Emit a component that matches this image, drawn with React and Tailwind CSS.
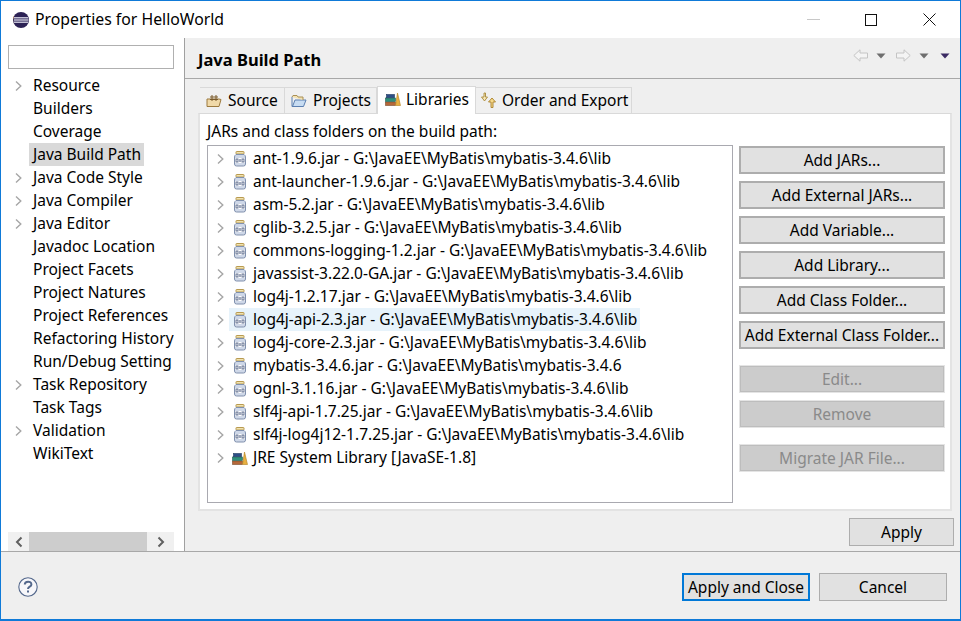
function Chevron({ className = "" }) {
  return (
    <svg width="9" height="12" viewBox="0 0 9 12" className={className}>
      <path d="M2 1.5 L6.8 6 L2 10.5" fill="none" stroke="#a6a6a6" strokeWidth="1.4" />
    </svg>
  );
}

function Jar() {
  return (
    <svg width="14" height="16" viewBox="0 0 14 16" className="shrink-0">
      <rect x="3" y="0.5" width="8" height="2.5" rx="0.5" fill="#f0e2b0" stroke="#b89a50" />
      <path d="M3 3.5 Q1.5 4.5 1.5 6 V13 Q1.5 15 3.5 15 H10.5 Q12.5 15 12.5 13 V6 Q12.5 4.5 11 3.5 Z" fill="#cfd8e8" stroke="#8090ad" />
      <rect x="2" y="7" width="10" height="5" fill="#fff" />
      <rect x="3" y="8" width="2" height="3" fill="none" stroke="#44557a" strokeWidth="0.8" />
      <rect x="6.5" y="8" width="1" height="3" fill="#44557a" />
      <rect x="9" y="8" width="2" height="3" fill="none" stroke="#44557a" strokeWidth="0.8" />
    </svg>
  );
}

function Books({ w = 16 }) {
  return (
    <svg width={w} height="14" viewBox="0 0 16 14" className="shrink-0">
      <rect x="0.5" y="10" width="10" height="3.5" fill="#b5683a" stroke="#7a4a2a" strokeWidth="0.6" />
      <rect x="0.5" y="6" width="10" height="3.5" fill="#2f8f7a" stroke="#1f5f55" strokeWidth="0.6" />
      <rect x="1.5" y="2.5" width="8" height="3.2" fill="#2c4f86" stroke="#203a60" strokeWidth="0.6" />
      <path d="M10.5 13.5 L12.5 1 L15.5 13.5 Z" fill="#e8b040" stroke="#b07f20" strokeWidth="0.6" />
    </svg>
  );
}

function SourceIcon() {
  return (
    <svg width="16" height="14" viewBox="0 0 16 14" className="shrink-0">
      <path d="M1 5 H13 L15 5.5 L13 12.5 H1 Z" fill="#f0d9a8" stroke="#9c7a3e" />
      <path d="M6 1 V7 M10 1 V7 M4 3 H12 M4 5.5 H12" stroke="#7a5a2a" strokeWidth="1" fill="none" />
    </svg>
  );
}

function ProjectIcon() {
  return (
    <svg width="16" height="14" viewBox="0 0 16 14" className="shrink-0">
      <path d="M1 3 V12.5 H12.5 L15 6 H4 L1.5 12.5" fill="#c7dcf2" stroke="#5b7fb0" />
      <path d="M1 3 L2 1.5 H6 L7 3 H12 V6" fill="#f3e2b2" stroke="#a98f55" />
    </svg>
  );
}

function OrderIcon() {
  return (
    <svg width="17" height="17" viewBox="0 0 17 17" className="shrink-0">
      <path d="M4 1 V5 L1.5 5 L4.5 9 L7.5 5 L5.5 5 V1 Z" fill="#f6e7b8" stroke="#a98a3a" strokeWidth="0.9" />
      <path d="M11 15.5 V10 H8.5 L12 6 L15.5 10 H13 V15.5 Z" fill="#f6d98a" stroke="#a9802a" strokeWidth="0.9" />
    </svg>
  );
}

function Eclipse() {
  return (
    <svg width="18" height="18" viewBox="0 0 18 18" className="shrink-0">
      <circle cx="9" cy="9" r="8" fill="#2c2255" />
      <path d="M1 9 A8 8 0 0 0 4 15.2 A8 8 0 0 1 4 2.8 A8 8 0 0 0 1 9" fill="#f09a30" />
      <rect x="2" y="6.2" width="14" height="1.2" fill="#e8e8f4" />
      <rect x="2" y="8.4" width="14.5" height="1.2" fill="#e8e8f4" />
      <rect x="2" y="10.6" width="14" height="1.2" fill="#e8e8f4" />
    </svg>
  );
}

const tree = [
  ["Resource", 1],
  ["Builders", 0],
  ["Coverage", 0],
  ["Java Build Path", 0, 1],
  ["Java Code Style", 1],
  ["Java Compiler", 1],
  ["Java Editor", 1],
  ["Javadoc Location", 0],
  ["Project Facets", 0],
  ["Project Natures", 0],
  ["Project References", 0],
  ["Refactoring History", 0],
  ["Run/Debug Setting", 0],
  ["Task Repository", 1],
  ["Task Tags", 0],
  ["Validation", 1],
  ["WikiText", 0],
];

const P = "G:\\JavaEE\\MyBatis\\mybatis-3.4.6";
const jars = [
  "ant-1.9.6.jar - " + P + "\\lib",
  "ant-launcher-1.9.6.jar - " + P + "\\lib",
  "asm-5.2.jar - " + P + "\\lib",
  "cglib-3.2.5.jar - " + P + "\\lib",
  "commons-logging-1.2.jar - " + P + "\\lib",
  "javassist-3.22.0-GA.jar - " + P + "\\lib",
  "log4j-1.2.17.jar - " + P + "\\lib",
  "log4j-api-2.3.jar - " + P + "\\lib",
  "log4j-core-2.3.jar - " + P + "\\lib",
  "mybatis-3.4.6.jar - " + P,
  "ognl-3.1.16.jar - " + P + "\\lib",
  "slf4j-api-1.7.25.jar - " + P + "\\lib",
  "slf4j-log4j12-1.7.25.jar - " + P + "\\lib",
];

function Btn({ children, disabled, className = "" }) {
  return (
    <div
      className={
        "h-7 flex items-center justify-center border-2 " +
        (disabled
          ? "bg-[#cccccc] border-[#e4e4e4] text-[#8a8a8a] outline outline-1 -outline-offset-2 outline-[#bdbdbd] "
          : "bg-[#e1e1e1] border-[#adadad] text-black ") +
        className
      }
    >
      {children}
    </div>
  );
}

function Tab({ icon, label, active, className = "" }) {
  return (
    <div
      className={
        "flex items-center border border-[#d9d9d9] " +
        (active ? "h-[28px] bg-white border-b-0 -mb-px z-10 pb-[3px] " : "h-[26px] bg-[#f0f0f0] border-l-0 border-b-0 ") +
        className
      }
    >
      {icon}
      <span>{label}</span>
    </div>
  );
}

function Tri({ color = "#6e6e6e" }) {
  return (
    <svg width="10" height="6" viewBox="0 0 10 6" className="shrink-0">
      <path d="M0.5 0.5 H9.5 L5 5.5 Z" fill={color} />
    </svg>
  );
}

export default function App() {
  return (
    <div className="w-[961px] h-[621px] border border-b-2 border-[#0f7ad8] bg-white flex flex-col overflow-hidden text-[15.5px] leading-[23px] text-black font-['Noto_Sans',sans-serif]">
      {/* Title bar */}
      <div className="h-[37px] shrink-0 flex items-center bg-white">
        <div className="ml-[11px]"><Eclipse /></div>
        <span className="ml-[5px] text-[15.8px]">Properties for HelloWorld</span>
        <div className="ml-auto flex items-center">
          <svg width="13" height="13" viewBox="0 0 13 13"><path d="M0 6.5 H13" stroke="#c8c8c8" /></svg>
          <svg width="12" height="12" viewBox="0 0 12 12" className="ml-[45px]"><rect x="0.5" y="0.5" width="11" height="11" fill="none" stroke="#111" /></svg>
          <svg width="13" height="13" viewBox="0 0 13 13" className="ml-[46px] mr-[24px]"><path d="M0.5 0.5 L12.5 12.5 M12.5 0.5 L0.5 12.5" stroke="#111" /></svg>
        </div>
      </div>

      {/* Main */}
      <div className="flex-1 flex min-h-0 border-b border-[#a8a8a8]">
        {/* Left */}
        <div className="w-[184px] shrink-0 border-r border-[#a0a0a0] bg-white flex flex-col pl-[7px] pr-[10px] pt-[7px]">
          <div className="h-[24px] border border-[#b0b0b0] bg-white shrink-0" />
          <div className="flex-1 pt-[5px] min-h-0 overflow-hidden">
            {tree.map(([t, c, sel]) => (
              <div key={t} className="h-[23px] flex items-center whitespace-nowrap">
                <div className="w-[22px] shrink-0 flex justify-center pr-[2px]">{c ? <Chevron /> : null}</div>
                {sel ? (
                  <span className="bg-[#d9d9d9] -ml-px pl-[4px] pr-[3px]">{t}</span>
                ) : (
                  <span className="pl-[3px]">{t}</span>
                )}
              </div>
            ))}
          </div>
          <div className="h-[19px] shrink-0 bg-[#f0f0f0] flex items-center">
            <div className="w-[21px] flex justify-center">
              <svg width="8" height="12" viewBox="0 0 8 12"><path d="M6.5 1.5 L2 6 L6.5 10.5" fill="none" stroke="#606060" strokeWidth="2" /></svg>
            </div>
            <div className="w-[118px] h-full bg-[#cdcdcd]" />
            <div className="flex-1 flex justify-center">
              <svg width="8" height="12" viewBox="0 0 8 12"><path d="M1.5 1.5 L6 6 L1.5 10.5" fill="none" stroke="#606060" strokeWidth="2" /></svg>
            </div>
          </div>
        </div>

        {/* Right */}
        <div className="flex-1 min-w-0 bg-[#efefef] flex flex-col">
          <div className="h-[41px] shrink-0 border-b border-[#a8a8a8] flex items-center pl-[13px] pr-[10px]">
            <span className="font-bold text-[16.5px] pt-[2px]">Java Build Path</span>
            <div className="ml-auto flex items-center -mt-[5px]">
              <svg width="15" height="13" viewBox="0 0 15 13"><path d="M14.5 4 H7 V0.8 L0.8 6.5 L7 12.2 V9 H14.5 Z" fill="#f4f4f4" stroke="#c4c4c4" /></svg>
              <div className="ml-[8px]"><Tri /></div>
              <svg width="15" height="13" viewBox="0 0 15 13" className="ml-[10px]"><path d="M0.5 4 H8 V0.8 L14.2 6.5 L8 12.2 V9 H0.5 Z" fill="#f4f4f4" stroke="#c4c4c4" /></svg>
              <div className="ml-[8px]"><Tri /></div>
              <div className="ml-[11px]"><Tri color="#3b2a63" /></div>
            </div>
          </div>

          <div className="pl-[13px] pr-[8px] pt-[8px] flex flex-col flex-1 min-h-0">
            {/* Tabs */}
            <div className="h-[26px] flex items-end shrink-0 pl-[2px]">
              <Tab className="w-[85px] pl-[6px] gap-[6px] border-l" icon={<SourceIcon />} label="Source" />
              <Tab className="w-[92px] pl-[6px] gap-[6px]" icon={<ProjectIcon />} label="Projects" />
              <Tab className="w-[99px] pl-[7px] gap-[5px]" active icon={<Books />} label="Libraries" />
              <Tab className="w-[156px] pl-[4px] gap-[5px]" icon={<OrderIcon />} label="Order and Export" />
            </div>
            {/* Panel */}
            <div className="h-[398px] shrink-0 bg-white border-2 border-[#e3e3e3] border-t border-t-[#d9d9d9] pl-[7px] pr-[5px] pt-[6px] flex flex-col">
              <div className="h-[23px] leading-[23px] shrink-0">JARs and class folders on the build path:</div>
              <div className="flex gap-[6px] mt-[2px] flex-1 min-h-0 pb-[6px]">
                <div className="w-[526px] border border-[#a9a9b0] bg-white pt-[1px] overflow-hidden">
                  {jars.map((t, i) => (
                    <div key={t} className="h-[23px] flex items-center whitespace-nowrap pl-[8px]">
                      <Chevron />
                      <div className={"flex items-center ml-[4px] pr-[3px] h-[23px] " + (i === 7 ? "bg-[#e7f3fb] " : "")}>
                        <div className="ml-[4px] mr-[6px]"><Jar /></div>
                        <span>{t}</span>
                      </div>
                    </div>
                  ))}
                  <div className="h-[23px] flex items-center whitespace-nowrap pl-[8px]">
                    <Chevron />
                    <div className="flex items-center ml-[7px]">
                      <Books />
                      <span className="ml-[5px]">JRE System Library [JavaSE-1.8]</span>
                    </div>
                  </div>
                </div>
                <div className="w-[206px] shrink-0 flex flex-col pt-px">
                  <Btn>Add JARs...</Btn>
                  <Btn className="mt-[7px]">Add External JARs...</Btn>
                  <Btn className="mt-[7px]">Add Variable...</Btn>
                  <Btn className="mt-[7px]">Add Library...</Btn>
                  <Btn className="mt-[7px]">Add Class Folder...</Btn>
                  <Btn className="mt-[7px]">Add External Class Folder...</Btn>
                  <Btn disabled className="mt-[16px]">Edit...</Btn>
                  <Btn disabled className="mt-[7px]">Remove</Btn>
                  <Btn disabled className="mt-[16px]">Migrate JAR File...</Btn>
                </div>
              </div>
            </div>
            <div className="flex justify-end mt-[7px] -mr-[2px]">
              <Btn className="w-[105px] !border pt-px">Apply</Btn>
            </div>
          </div>
        </div>
      </div>

      {/* Bottom */}
      <div className="h-[67px] shrink-0 bg-[#efefef] flex items-center pl-[17px] pr-[13px] pt-[2px]">
        <svg width="20" height="20" viewBox="0 0 20 20">
          <circle cx="10" cy="10" r="9.2" fill="#f7f7fa" stroke="#54688c" strokeWidth="1.1" />
          <path d="M6.8 7.5 C6.8 3.7 13.4 3.7 13.4 7.4 C13.4 9.8 10 9.6 10 12" fill="none" stroke="#54688c" strokeWidth="2" />
          <rect x="9" y="13.5" width="2" height="2" fill="#54688c" />
        </svg>
        <div className="ml-auto flex gap-[9px]">
          <Btn className="w-[128px] !border-2 !border-[#0078d7] pt-px">Apply and Close</Btn>
          <Btn className="w-[128px] !border pt-px">Cancel</Btn>
        </div>
      </div>
    </div>
  );
}
